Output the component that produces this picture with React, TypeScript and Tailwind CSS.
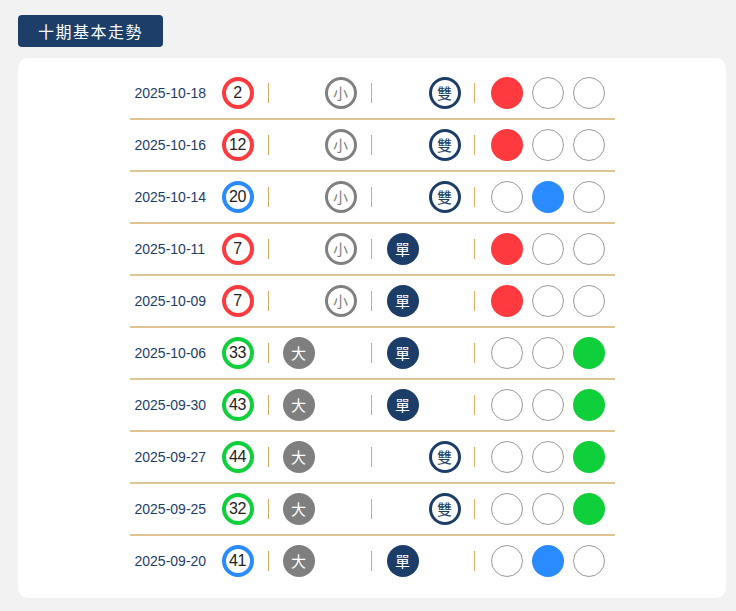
import React from "react";

type Color = "red" | "blue" | "green";

type Draw = {
  date: string;
  num: number;
  color: Color;
  big: boolean;
  odd: boolean;
};

const DRAWS: Draw[] = [
  { date: "2025-10-18", num: 2, color: "red", big: false, odd: false },
  { date: "2025-10-16", num: 12, color: "red", big: false, odd: false },
  { date: "2025-10-14", num: 20, color: "blue", big: false, odd: false },
  { date: "2025-10-11", num: 7, color: "red", big: false, odd: true },
  { date: "2025-10-09", num: 7, color: "red", big: false, odd: true },
  { date: "2025-10-06", num: 33, color: "green", big: true, odd: true },
  { date: "2025-09-30", num: 43, color: "green", big: true, odd: true },
  { date: "2025-09-27", num: 44, color: "green", big: true, odd: false },
  { date: "2025-09-25", num: 32, color: "green", big: true, odd: false },
  { date: "2025-09-20", num: 41, color: "blue", big: true, odd: true },
];

const RING: Record<Color, string> = {
  red: "border-[#ff3a3f]",
  blue: "border-[#2a8bff]",
  green: "border-[#0fcf3a]",
};

const FILL: Record<Color, string> = {
  red: "bg-[#ff3a3f]",
  blue: "bg-[#2a8bff]",
  green: "bg-[#0fcf3a]",
};

const cjk = "font-['Noto_Sans_CJK_TC','Noto_Sans_CJK_SC',sans-serif]";

function Sep() {
  return <div className="h-5 w-px shrink-0 bg-[#d6ab62]" />;
}

function Slot({ children }: { children?: React.ReactNode }) {
  return <div className="flex h-8 w-8 shrink-0 items-center justify-center">{children}</div>;
}

function Row({ draw, last }: { draw: Draw; last: boolean }) {
  return (
    <div
      className={`flex items-center ${last ? "h-[50px]" : "h-[52px] border-b-2 border-[#e0c594]"}`}
    >
      <div className="w-[92px] shrink-0 pl-[5px] text-[14px] text-[#1d3d66]">{draw.date}</div>
      <div
        className={`flex h-8 w-8 shrink-0 items-center justify-center rounded-full border-4 bg-white text-[16px] tracking-[-0.5px] text-[#222] ${RING[draw.color]}`}
      >
        {draw.num}
      </div>
      <div className="ml-[14px]">
        <Sep />
      </div>
      <div className="ml-[14px] flex gap-[10px]">
        <Slot>
          {draw.big && (
            <div
              className={`flex h-8 w-8 items-center justify-center rounded-full bg-[#7f7f7f] text-[15px] text-white ${cjk}`}
            >
              大
            </div>
          )}
        </Slot>
        <Slot>
          {!draw.big && (
            <div
              className={`flex h-8 w-8 items-center justify-center rounded-full border-[3px] border-[#808080] text-[15px] text-[#808080] ${cjk}`}
            >
              小
            </div>
          )}
        </Slot>
      </div>
      <div className="ml-[14px]">
        <Sep />
      </div>
      <div className="ml-[15px] flex gap-[10px]">
        <Slot>
          {draw.odd && (
            <div
              className={`flex h-8 w-8 items-center justify-center rounded-full bg-[#1b3d68] text-[15px] text-white ${cjk}`}
            >
              單
            </div>
          )}
        </Slot>
        <Slot>
          {!draw.odd && (
            <div
              className={`flex h-8 w-8 items-center justify-center rounded-full border-[3px] border-[#1b3d68] text-[15px] text-[#1b3d68] ${cjk}`}
            >
              雙
            </div>
          )}
        </Slot>
      </div>
      <div className="ml-[13px]">
        <Sep />
      </div>
      <div className="ml-4 flex gap-[9px]">
        {(["red", "blue", "green"] as Color[]).map((c) =>
          c === draw.color ? (
            <div key={c} className={`h-8 w-8 rounded-full ${FILL[c]}`} />
          ) : (
            <div key={c} className="h-8 w-8 rounded-full border border-[#9a9a9a] bg-white" />
          )
        )}
      </div>
    </div>
  );
}

export default function App() {
  return (
    <div className="min-h-[611px] bg-[#f2f2f2] pl-[18px] pr-[10px] pt-[15px] font-['Liberation_Sans',Arial,sans-serif]">
      <div
        className={`inline-flex h-8 items-center rounded-[4px] bg-[#1c3e69] px-5 text-[16px] font-normal tracking-[1.5px] text-white ${cjk}`}
      >
        十期基本走勢
      </div>
      <div className="mt-[11px] flex justify-center rounded-[10px] bg-white pb-[12px] pt-[10px]">
        <div className="w-[485px]">
          {DRAWS.map((d, i) => (
            <Row key={d.date} draw={d} last={i === DRAWS.length - 1} />
          ))}
        </div>
      </div>
    </div>
  );
}
